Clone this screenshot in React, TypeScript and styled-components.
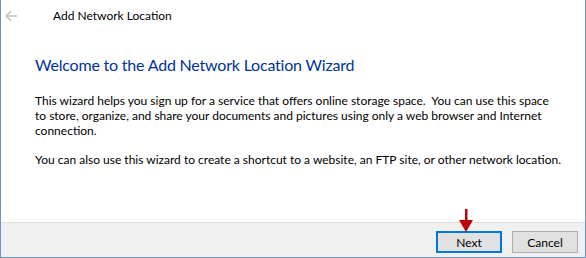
import React from "react";
import styled, { createGlobalStyle } from "styled-components";

const GlobalStyle = createGlobalStyle`
  html, body {
    margin: 0;
    padding: 0;
    background: #ffffff;
  }
  body {
    font-family: Lato, "Noto Sans", sans-serif;
    font-size: 12px;
    color: #000000;
  }
`;

const Window = styled.div`
  position: relative;
  width: 586px;
  height: 258px;
  box-sizing: border-box;
  border: 1px solid #6a93c9;
  border-top: none;
  background: #ffffff;
  display: flex;
  flex-direction: column;
`;

const TitleBar = styled.div`
  height: 31px;
  display: flex;
  align-items: center;
  gap: 35px;
  padding-left: 4px;
`;

const BackButton = styled.span`
  display: flex;
  width: 13px;
  height: 12px;
  color: #c4c4c4;
`;

const Title = styled.span`
  font-size: 12px;
  color: #000000;
`;

const Body = styled.div`
  flex: 1;
  padding: 0 0 0 34px;
`;

const Heading = styled.h1`
  margin: 23px 0 0 0;
  font-size: 16px;
  font-weight: normal;
  letter-spacing: -0.2px;
  color: #003399;
  line-height: 22px;
`;

const Paragraph = styled.p`
  margin: 17px 0 0 0;
  line-height: 15px;
  white-space: nowrap;

  & + & {
    margin-top: 14px;
  }
`;

const Footer = styled.div`
  height: 35px;
  box-sizing: border-box;
  border-top: 1px solid #dfdfdf;
  background: #f0f0f0;
  display: flex;
  justify-content: flex-end;
  align-items: flex-start;
  gap: 10px;
  padding: 8px 7px 0 0;
`;

const ButtonWrap = styled.div`
  position: relative;
`;

const Button = styled.button<{ $primary?: boolean }>`
  width: 66px;
  height: 22px;
  box-sizing: border-box;
  margin: 0;
  padding: 0;
  font-family: inherit;
  font-size: 12px;
  color: #000000;
  background: #e1e1e1;
  border: ${(p) => (p.$primary ? "2px solid #0078d7" : "1px solid #adadad")};
`;

const Pointer = styled.svg`
  position: absolute;
  left: 23px;
  top: -22px;
`;

export default function App() {
  return (
    <>
      <GlobalStyle />
      <Window>
        <TitleBar>
          <BackButton>
            <svg width="13" height="12" viewBox="0 0 13 12">
              <path
                d="M6 1 L1 6 L6 11 M1 6 H12"
                fill="none"
                stroke="currentColor"
                strokeWidth="1.5"
              />
            </svg>
          </BackButton>
          <Title>Add Network Location</Title>
        </TitleBar>
        <Body>
          <Heading>Welcome to the Add Network Location Wizard</Heading>
          <Paragraph>
            This wizard helps you sign up for a service that offers online
            storage space.&nbsp; You can use this space
            <br />
            to store, organize, and share your documents and pictures using only
            a web browser and Internet
            <br />
            connection.
          </Paragraph>
          <Paragraph>
            You can also use this wizard to create a shortcut to a website, an
            FTP site, or other network location.
          </Paragraph>
        </Body>
        <Footer>
          <ButtonWrap>
            <Pointer width="14" height="24" viewBox="0 0 14 24">
              <rect x="6" y="0" width="2.5" height="12" fill="#c00000" />
              <polygon points="0,11 14,11 7,23" fill="#c00000" />
            </Pointer>
            <Button $primary>Next</Button>
          </ButtonWrap>
          <Button>Cancel</Button>
        </Footer>
      </Window>
    </>
  );
}
